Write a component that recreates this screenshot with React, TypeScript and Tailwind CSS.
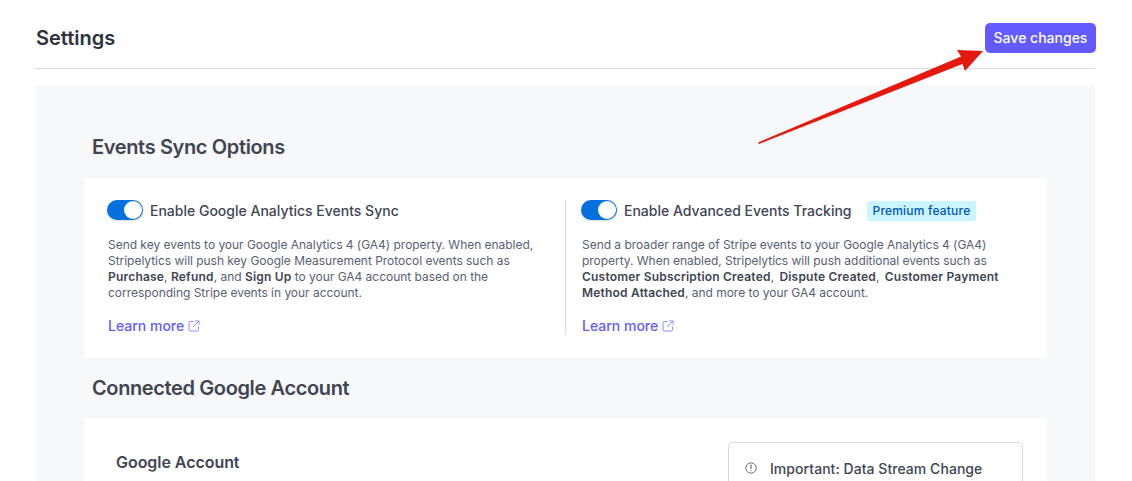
import React from "react";

const font = { fontFamily: "Inter, 'Noto Sans', sans-serif" };

function Toggle() {
  return (
    <div className="flex h-5 w-9 shrink-0 items-center justify-end rounded-full bg-[#0570de] shadow-[0_1px_2px_rgba(0,0,0,0.15)]">
      <div className="h-[18px] w-[18px] mr-px rounded-full bg-white" />
    </div>
  );
}

function LearnMore() {
  return (
    <a className="mt-[15px] flex items-center gap-1 text-[14px] leading-5 font-medium text-[#635bff]">
      Learn more
      <svg width="12" height="12" viewBox="0 0 12 12" fill="none" stroke="#8f89ff" strokeWidth="1" strokeLinecap="round" strokeLinejoin="round">
        <path d="M5 1.5H2.2A1.2 1.2 0 0 0 1 2.7v7.1A1.2 1.2 0 0 0 2.2 11h7.1a1.2 1.2 0 0 0 1.2-1.2V7" />
        <path d="M7.5 1H11v3.5M11 1 5.5 6.5" />
      </svg>
    </a>
  );
}

function B({ children }: { children: React.ReactNode }) {
  return <b className="font-semibold tracking-[0.2px] text-[#414552]">{children}</b>;
}

export default function App() {
  return (
    <div style={font} className="relative h-[481px] w-[1132px] overflow-hidden bg-white">
      <div className="mx-9 flex h-[69px] w-[1059px] items-center justify-between border-b border-[#d8dbe3] pt-2">
        <h1 className="text-[20px] leading-7 font-semibold text-[#30313d]">Settings</h1>
        <button className="-mr-px h-[30px] w-[111px] rounded-[5px] bg-[#635bff] pb-px text-[14px] font-medium text-white">Save changes</button>
      </div>

      <div className="mx-9 mt-4 w-[1059px] rounded-t-[4px] bg-[#f6f8fa] px-12 pt-12">
        <h2 className="pl-2 text-[20px] leading-7 font-semibold tracking-[-0.36px] text-[#414552]">Events Sync Options</h2>
        <div className="mt-[17px] flex h-[180px] w-[963px] bg-white pt-[22px]">
          <div className="w-[481px] pl-6 pr-5">
            <div className="-ml-px flex h-5 items-center gap-[7px]">
              <Toggle />
              <span className="text-[14px] font-medium text-[#414552]">Enable Google Analytics Events Sync</span>
            </div>
            <p className="mt-[17px] text-[12px] leading-4 tracking-[-0.03px] text-[#596171]">
              Send key events to your Google Analytics 4 (GA4) property. When enabled, Stripelytics will push key Google Measurement Protocol events such as{" "}
              <B>Purchase</B>, <B>Refund</B>, and <B>Sign Up</B> to your GA4 account based on the corresponding Stripe events in your account.
            </p>
            <LearnMore />
          </div>
          <div className="h-[134px] w-[440px] border-l border-[#d8dbe3] pl-4">
            <div className="-ml-px flex h-5 items-center gap-[7px]">
              <Toggle />
              <span className="text-[14px] font-medium text-[#414552]">Enable Advanced Events Tracking</span>
              <span className="mt-[2px] ml-2 rounded-[3px] bg-[#cbf5fd] px-[6px] text-[12px] leading-5 font-medium tracking-[0.2px] text-[#0055bc]">Premium feature</span>
            </div>
            <p className="mt-[17px] text-[12px] leading-4 tracking-[-0.03px] text-[#596171]">
              Send a broader range of Stripe events to your Google Analytics 4 (GA4) property. When enabled, Stripelytics will push additional events such as{" "}
              <B>Customer Subscription Created</B>, <span className="ml-[2px]"><B>Dispute Created</B></span>, <span className="ml-[2px]"><B>Customer Payment Method Attached</B></span>, and more to your GA4 account.
            </p>
            <LearnMore />
          </div>
        </div>

        <h2 className="mt-4 pl-2 text-[20px] leading-7 font-semibold tracking-[-0.38px] text-[#414552]">Connected Google Account</h2>
        <div className="mt-4 flex h-[200px] w-[963px] justify-between bg-white pl-8 pr-6 pt-6">
          <h3 className="mt-2 text-[16px] leading-6 font-semibold tracking-[-0.05px] text-[#414552]">Google Account</h3>
          <div className="h-[160px] w-[295px] rounded-[4px] border border-[#d8dbe3] px-4 pt-[15px]">
            <div className="flex h-5 items-center gap-[13px]">
              <svg width="12" height="12" viewBox="0 0 12 12" fill="none" stroke="#6a7383" strokeWidth="1">
                <circle cx="6" cy="6" r="5.2" />
                <path d="M6 3.2v3.3" strokeLinecap="round" strokeWidth="1.2" />
                <circle cx="6" cy="8.6" r="0.6" fill="#6a7383" stroke="none" />
              </svg>
              <span className="text-[14px] font-medium tracking-[0.05px] text-[#414552]">Important: Data Stream Change</span>
            </div>
          </div>
        </div>
      </div>

      <svg className="pointer-events-none absolute left-0 top-0" width="1132" height="481" viewBox="0 0 1132 481">
        <polygon points="758,142.5 961,56.5 957,50 983,51 965,71 962.5,64 759,144" fill="#e5190f" />
      </svg>
    </div>
  );
}
